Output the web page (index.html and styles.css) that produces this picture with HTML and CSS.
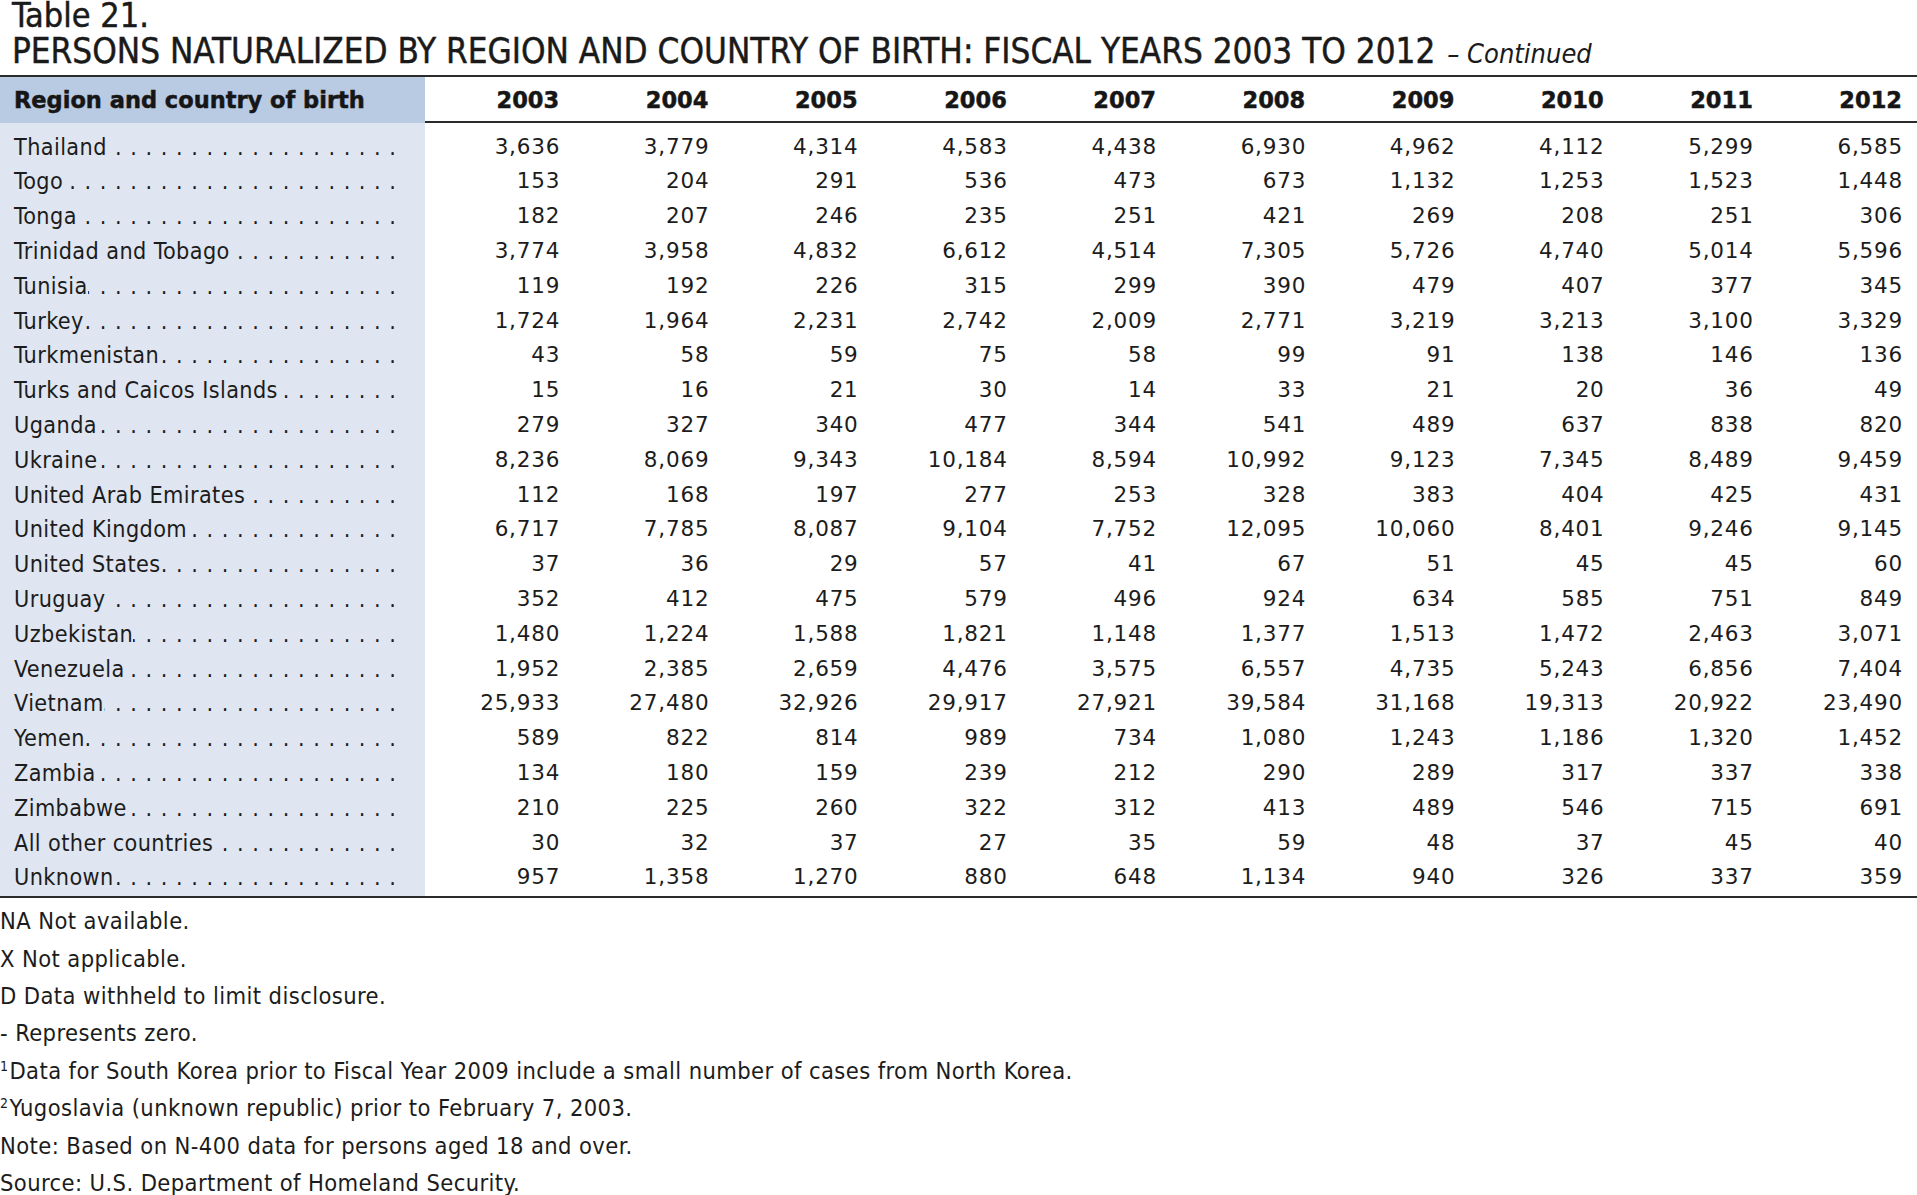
FILE: index.html
```html
<!DOCTYPE html>
<html lang="en">
<head>
<meta charset="utf-8">
<title>Table 21. Persons naturalized by region and country of birth</title>
<link rel="stylesheet" href="styles.css">
</head>
<body>
<header class="caption">
  <div class="cap-num">Table 21.</div>
  <div class="cap-title">PERSONS NATURALIZED BY REGION AND COUNTRY OF BIRTH: FISCAL YEARS 2003 TO 2012 <span class="cont">– Continued</span></div>
</header>
<div class="tbl" role="table">
  <div class="row head" role="row">
    <div class="cell label" role="columnheader">Region and country of birth</div>
    <div class="cell num" role="columnheader">2003</div>
    <div class="cell num" role="columnheader">2004</div>
    <div class="cell num" role="columnheader">2005</div>
    <div class="cell num" role="columnheader">2006</div>
    <div class="cell num" role="columnheader">2007</div>
    <div class="cell num" role="columnheader">2008</div>
    <div class="cell num" role="columnheader">2009</div>
    <div class="cell num" role="columnheader">2010</div>
    <div class="cell num" role="columnheader">2011</div>
    <div class="cell num" role="columnheader">2012</div>
  </div>
  <div class="tbody" role="rowgroup">
    <div class="row" role="row"><div class="cell label"><span class="name">Thailand</span><span class="lead">. . . . . . . . . . . . . . . . . . . . . . . . . . . .</span></div><div class="cell num">3,636</div><div class="cell num">3,779</div><div class="cell num">4,314</div><div class="cell num">4,583</div><div class="cell num">4,438</div><div class="cell num">6,930</div><div class="cell num">4,962</div><div class="cell num">4,112</div><div class="cell num">5,299</div><div class="cell num">6,585</div></div>
    <div class="row" role="row"><div class="cell label"><span class="name">Togo</span><span class="lead">. . . . . . . . . . . . . . . . . . . . . . . . . . . .</span></div><div class="cell num">153</div><div class="cell num">204</div><div class="cell num">291</div><div class="cell num">536</div><div class="cell num">473</div><div class="cell num">673</div><div class="cell num">1,132</div><div class="cell num">1,253</div><div class="cell num">1,523</div><div class="cell num">1,448</div></div>
    <div class="row" role="row"><div class="cell label"><span class="name">Tonga</span><span class="lead">. . . . . . . . . . . . . . . . . . . . . . . . . . . .</span></div><div class="cell num">182</div><div class="cell num">207</div><div class="cell num">246</div><div class="cell num">235</div><div class="cell num">251</div><div class="cell num">421</div><div class="cell num">269</div><div class="cell num">208</div><div class="cell num">251</div><div class="cell num">306</div></div>
    <div class="row" role="row"><div class="cell label"><span class="name">Trinidad and Tobago</span><span class="lead">. . . . . . . . . . . . . . . . . . . . . . . . . . . .</span></div><div class="cell num">3,774</div><div class="cell num">3,958</div><div class="cell num">4,832</div><div class="cell num">6,612</div><div class="cell num">4,514</div><div class="cell num">7,305</div><div class="cell num">5,726</div><div class="cell num">4,740</div><div class="cell num">5,014</div><div class="cell num">5,596</div></div>
    <div class="row" role="row"><div class="cell label"><span class="name">Tunisia</span><span class="lead">. . . . . . . . . . . . . . . . . . . . . . . . . . . .</span></div><div class="cell num">119</div><div class="cell num">192</div><div class="cell num">226</div><div class="cell num">315</div><div class="cell num">299</div><div class="cell num">390</div><div class="cell num">479</div><div class="cell num">407</div><div class="cell num">377</div><div class="cell num">345</div></div>
    <div class="row" role="row"><div class="cell label"><span class="name">Turkey</span><span class="lead">. . . . . . . . . . . . . . . . . . . . . . . . . . . .</span></div><div class="cell num">1,724</div><div class="cell num">1,964</div><div class="cell num">2,231</div><div class="cell num">2,742</div><div class="cell num">2,009</div><div class="cell num">2,771</div><div class="cell num">3,219</div><div class="cell num">3,213</div><div class="cell num">3,100</div><div class="cell num">3,329</div></div>
    <div class="row" role="row"><div class="cell label"><span class="name">Turkmenistan</span><span class="lead">. . . . . . . . . . . . . . . . . . . . . . . . . . . .</span></div><div class="cell num">43</div><div class="cell num">58</div><div class="cell num">59</div><div class="cell num">75</div><div class="cell num">58</div><div class="cell num">99</div><div class="cell num">91</div><div class="cell num">138</div><div class="cell num">146</div><div class="cell num">136</div></div>
    <div class="row" role="row"><div class="cell label"><span class="name">Turks and Caicos Islands</span><span class="lead">. . . . . . . . . . . . . . . . . . . . . . . . . . . .</span></div><div class="cell num">15</div><div class="cell num">16</div><div class="cell num">21</div><div class="cell num">30</div><div class="cell num">14</div><div class="cell num">33</div><div class="cell num">21</div><div class="cell num">20</div><div class="cell num">36</div><div class="cell num">49</div></div>
    <div class="row" role="row"><div class="cell label"><span class="name">Uganda</span><span class="lead">. . . . . . . . . . . . . . . . . . . . . . . . . . . .</span></div><div class="cell num">279</div><div class="cell num">327</div><div class="cell num">340</div><div class="cell num">477</div><div class="cell num">344</div><div class="cell num">541</div><div class="cell num">489</div><div class="cell num">637</div><div class="cell num">838</div><div class="cell num">820</div></div>
    <div class="row" role="row"><div class="cell label"><span class="name">Ukraine</span><span class="lead">. . . . . . . . . . . . . . . . . . . . . . . . . . . .</span></div><div class="cell num">8,236</div><div class="cell num">8,069</div><div class="cell num">9,343</div><div class="cell num">10,184</div><div class="cell num">8,594</div><div class="cell num">10,992</div><div class="cell num">9,123</div><div class="cell num">7,345</div><div class="cell num">8,489</div><div class="cell num">9,459</div></div>
    <div class="row" role="row"><div class="cell label"><span class="name">United Arab Emirates</span><span class="lead">. . . . . . . . . . . . . . . . . . . . . . . . . . . .</span></div><div class="cell num">112</div><div class="cell num">168</div><div class="cell num">197</div><div class="cell num">277</div><div class="cell num">253</div><div class="cell num">328</div><div class="cell num">383</div><div class="cell num">404</div><div class="cell num">425</div><div class="cell num">431</div></div>
    <div class="row" role="row"><div class="cell label"><span class="name">United Kingdom</span><span class="lead">. . . . . . . . . . . . . . . . . . . . . . . . . . . .</span></div><div class="cell num">6,717</div><div class="cell num">7,785</div><div class="cell num">8,087</div><div class="cell num">9,104</div><div class="cell num">7,752</div><div class="cell num">12,095</div><div class="cell num">10,060</div><div class="cell num">8,401</div><div class="cell num">9,246</div><div class="cell num">9,145</div></div>
    <div class="row" role="row"><div class="cell label"><span class="name">United States</span><span class="lead">. . . . . . . . . . . . . . . . . . . . . . . . . . . .</span></div><div class="cell num">37</div><div class="cell num">36</div><div class="cell num">29</div><div class="cell num">57</div><div class="cell num">41</div><div class="cell num">67</div><div class="cell num">51</div><div class="cell num">45</div><div class="cell num">45</div><div class="cell num">60</div></div>
    <div class="row" role="row"><div class="cell label"><span class="name">Uruguay</span><span class="lead">. . . . . . . . . . . . . . . . . . . . . . . . . . . .</span></div><div class="cell num">352</div><div class="cell num">412</div><div class="cell num">475</div><div class="cell num">579</div><div class="cell num">496</div><div class="cell num">924</div><div class="cell num">634</div><div class="cell num">585</div><div class="cell num">751</div><div class="cell num">849</div></div>
    <div class="row" role="row"><div class="cell label"><span class="name">Uzbekistan</span><span class="lead">. . . . . . . . . . . . . . . . . . . . . . . . . . . .</span></div><div class="cell num">1,480</div><div class="cell num">1,224</div><div class="cell num">1,588</div><div class="cell num">1,821</div><div class="cell num">1,148</div><div class="cell num">1,377</div><div class="cell num">1,513</div><div class="cell num">1,472</div><div class="cell num">2,463</div><div class="cell num">3,071</div></div>
    <div class="row" role="row"><div class="cell label"><span class="name">Venezuela</span><span class="lead">. . . . . . . . . . . . . . . . . . . . . . . . . . . .</span></div><div class="cell num">1,952</div><div class="cell num">2,385</div><div class="cell num">2,659</div><div class="cell num">4,476</div><div class="cell num">3,575</div><div class="cell num">6,557</div><div class="cell num">4,735</div><div class="cell num">5,243</div><div class="cell num">6,856</div><div class="cell num">7,404</div></div>
    <div class="row" role="row"><div class="cell label"><span class="name">Vietnam</span><span class="lead">. . . . . . . . . . . . . . . . . . . . . . . . . . . .</span></div><div class="cell num">25,933</div><div class="cell num">27,480</div><div class="cell num">32,926</div><div class="cell num">29,917</div><div class="cell num">27,921</div><div class="cell num">39,584</div><div class="cell num">31,168</div><div class="cell num">19,313</div><div class="cell num">20,922</div><div class="cell num">23,490</div></div>
    <div class="row" role="row"><div class="cell label"><span class="name">Yemen</span><span class="lead">. . . . . . . . . . . . . . . . . . . . . . . . . . . .</span></div><div class="cell num">589</div><div class="cell num">822</div><div class="cell num">814</div><div class="cell num">989</div><div class="cell num">734</div><div class="cell num">1,080</div><div class="cell num">1,243</div><div class="cell num">1,186</div><div class="cell num">1,320</div><div class="cell num">1,452</div></div>
    <div class="row" role="row"><div class="cell label"><span class="name">Zambia</span><span class="lead">. . . . . . . . . . . . . . . . . . . . . . . . . . . .</span></div><div class="cell num">134</div><div class="cell num">180</div><div class="cell num">159</div><div class="cell num">239</div><div class="cell num">212</div><div class="cell num">290</div><div class="cell num">289</div><div class="cell num">317</div><div class="cell num">337</div><div class="cell num">338</div></div>
    <div class="row" role="row"><div class="cell label"><span class="name">Zimbabwe</span><span class="lead">. . . . . . . . . . . . . . . . . . . . . . . . . . . .</span></div><div class="cell num">210</div><div class="cell num">225</div><div class="cell num">260</div><div class="cell num">322</div><div class="cell num">312</div><div class="cell num">413</div><div class="cell num">489</div><div class="cell num">546</div><div class="cell num">715</div><div class="cell num">691</div></div>
    <div class="row" role="row"><div class="cell label"><span class="name">All other countries</span><span class="lead">. . . . . . . . . . . . . . . . . . . . . . . . . . . .</span></div><div class="cell num">30</div><div class="cell num">32</div><div class="cell num">37</div><div class="cell num">27</div><div class="cell num">35</div><div class="cell num">59</div><div class="cell num">48</div><div class="cell num">37</div><div class="cell num">45</div><div class="cell num">40</div></div>
    <div class="row" role="row"><div class="cell label"><span class="name">Unknown</span><span class="lead">. . . . . . . . . . . . . . . . . . . . . . . . . . . .</span></div><div class="cell num">957</div><div class="cell num">1,358</div><div class="cell num">1,270</div><div class="cell num">880</div><div class="cell num">648</div><div class="cell num">1,134</div><div class="cell num">940</div><div class="cell num">326</div><div class="cell num">337</div><div class="cell num">359</div></div>
  </div>
</div>
<footer class="notes">
  <p>NA Not available.</p>
  <p>X Not applicable.</p>
  <p>D Data withheld to limit disclosure.</p>
  <p>- Represents zero.</p>
  <p><sup>1</sup>Data for South Korea prior to Fiscal Year 2009 include a small number of cases from North Korea.</p>
  <p><sup>2</sup>Yugoslavia (unknown republic) prior to February 7, 2003.</p>
  <p>Note: Based on N-400 data for persons aged 18 and over.</p>
  <p>Source: U.S. Department of Homeland Security.</p>
</footer>
</body>
</html>
```

FILE: styles.css
```css
html, body {
  margin: 0;
  padding: 0;
  background: #ffffff;
}

body {
  width: 1917px;
  color: #1e1e1e;
  font-family: "DejaVu Sans Condensed", "DejaVu Sans", sans-serif;
}

/* ---------- caption ---------- */
.caption {
  box-sizing: border-box;
  height: 75px;
  padding-left: 12px;
  display: flex;
  flex-direction: column;
  font-family: "DejaVu Sans Condensed", "DejaVu Sans", sans-serif;
  color: #1a1a1a;
  -webkit-text-stroke: 0.45px #1a1a1a;
}

.cap-num {
  font-size: 34px;
  line-height: 31px;
  height: 31px;
}

.cap-title {
  font-size: 34.75px;
  line-height: 40px;
  white-space: nowrap;
}

.cont {
  font-style: italic;
  font-size: 27px;
  margin-left: 2px;
  -webkit-text-stroke: 0;
}

/* ---------- table ---------- */
.tbl {
  width: 1917px;
  border-top: 2px solid #2b2b2b;
  border-bottom: 2px solid #2b2b2b;
}

.row {
  display: grid;
  grid-template-columns: 425px repeat(10, 1fr);
}

.cell {
  min-width: 0;
  white-space: nowrap;
}

.num {
  text-align: right;
  padding-right: 14px;
}

/* header */
.head {
  height: 44px;
  border-bottom: 2px solid #2b2b2b;
  font-family: "DejaVu Sans", sans-serif;
  font-weight: 700;
  font-size: 22.5px;
  line-height: 46px;
  color: #161616;
  -webkit-text-stroke: 0.5px #161616;
}

.head .label {
  padding-left: 14px;
  background: #b9cae3;
}

.head .num {
  padding-right: 15px;
}

/* body */
.tbody {
  padding: 6.7px 0 1px;
  background: linear-gradient(90deg, #dfe6f2 425px, transparent 425px);
}

.tbody .row {
  height: 34.8px;
  line-height: 34.8px;
  font-family: "DejaVu Sans", sans-serif;
  font-size: 21.5px;
  letter-spacing: 0.8px;
  color: #1c1c1c;
}

.tbody .label {
  display: flex;
  align-items: baseline;
  padding: 0 28px 0 14px;
  font-family: "DejaVu Sans Condensed", "DejaVu Sans", sans-serif;
  font-size: 23.2px;
  letter-spacing: 0.4px;
}

.name {
  flex: none;
}

.lead {
  flex: 1;
  min-width: 0;
  overflow: hidden;
  direction: rtl;
  white-space: nowrap;
  letter-spacing: 1px;
  padding-left: 4px;
}

/* ---------- notes ---------- */
.notes {
  padding-top: 5px;
  font-family: "DejaVu Sans Condensed", "DejaVu Sans", sans-serif;
  font-size: 23.5px;
  letter-spacing: 0.4px;
  color: #1c1c1c;
}

.notes p {
  margin: 0;
  line-height: 37.4px;
  white-space: nowrap;
}

.notes sup {
  font-size: 14px;
  vertical-align: 8px;
  line-height: 0;
  margin-right: 1px;
}
```
